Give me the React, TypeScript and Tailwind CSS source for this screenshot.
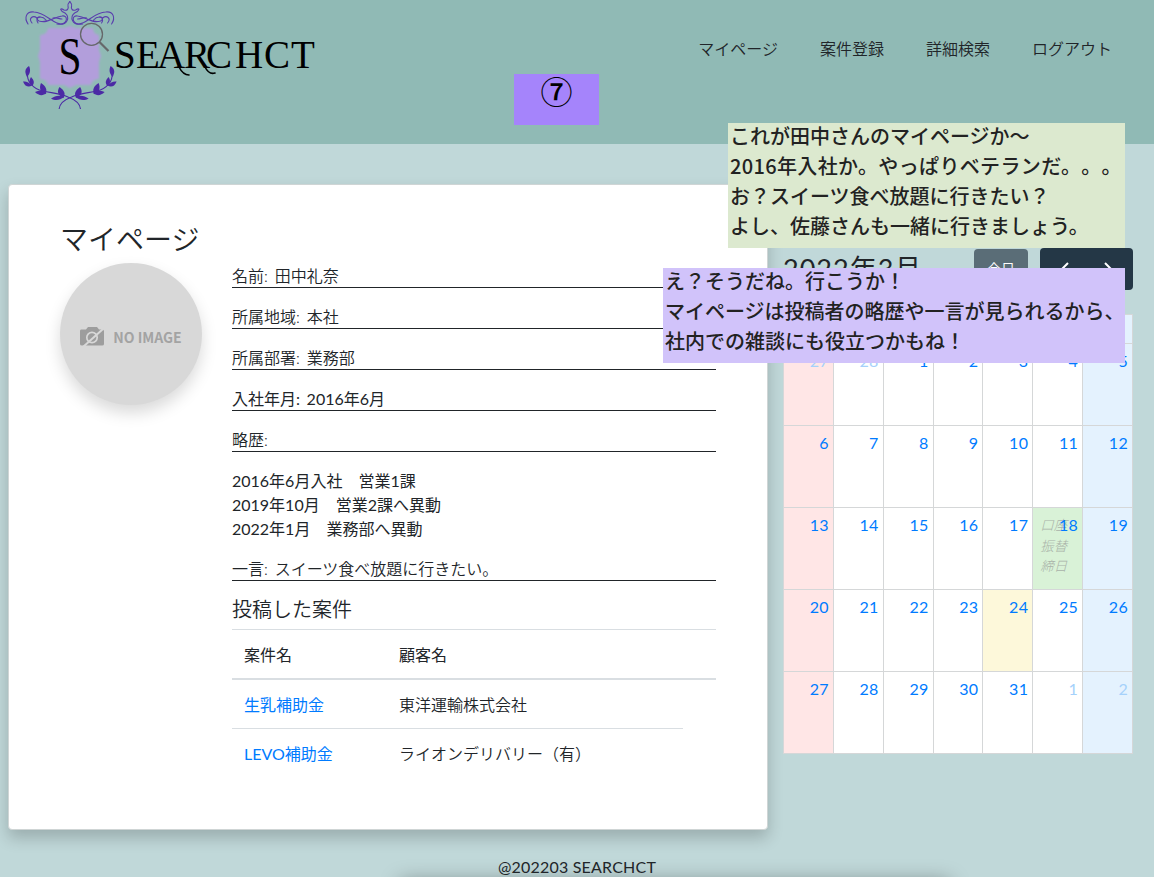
import React from "react";

const info = ["名前: 田中礼奈", "所属地域: 本社", "所属部署: 業務部", "入社年月: 2016年6月", "略歴:"];
const nav = ["マイページ", "案件登録", "詳細検索", "ログアウト"];
const weeks = [
  [27, 28, 1, 2, 3, 4, 5],
  [6, 7, 8, 9, 10, 11, 12],
  [13, 14, 15, 16, 17, 18, 19],
  [20, 21, 22, 23, 24, 25, 26],
  [27, 28, 29, 30, 31, 1, 2],
];
const weekdays = ["日", "月", "火", "水", "木", "金", "土"];

function Laurel() {
  return (
    <g>
      <path d="M27.500 72 C27 78 28 81 31 84 C34 88 38 90 43 91 C51 93 60 93 68 97 C76 100 80 104 80.500 109" fill="none" stroke="#4b2aa5" strokeWidth="1.1" />
      <g fill="#4b2aa5">
        <path d="M29 66 C24 69 25 73 27 77 C30 74 31 70 29 66Z" />
        <path d="M23 81.500 C25 87 29 87.500 32 85.500 C29 82 26 81 23 81.500Z" />
        <path d="M31 77 C34 80 35 83 32 86 C29 83 29 80 31 77Z" />
        <path d="M41 83 C46 86 47.500 90 45.500 94 C40 92 39 88 41 83Z" />
        <path d="M35 92 C39 96 43 96 46.500 93 C43 90 39 90.500 35 92Z" />
        <path d="M59.500 87 C65 91 65.500 94 63.500 98 C57 95 57 91 59.500 87Z" />
        <path d="M51 98.500 C55 101 60 100.500 64 97 C59 94.500 55 96 51 98.500Z" />
      </g>
    </g>
  );
}

function Scroll() {
  return (
    <g fill="none" stroke="#5a3fae" strokeWidth="1.1" strokeLinecap="round">
      <path d="M28 24 C24 18 26 11 34 12 C45 12 53 24 61 24 C68 23 68 15 62 16 C53 17 48 24 39 21 C33 17 42 15 46 20" />
      <path d="M32 23 C28 18 33 15 37 18 M38 23 C36 20 37 17 40 17 M53 18 C56 17 59 19 62 19" />
      <path d="M57 24 C68 26 70 17 65 13 C60 11 59 7 64 10 C67 11 69 9 68 6 C67 4 69 3 70 1.500" />
    </g>
  );
}

function Logo() {
  return (
    <svg width="320" height="116" viewBox="0 0 320 116" className="block">
      <defs>
        <filter id="soft" x="-10%" y="-10%" width="120%" height="120%">
          <feGaussianBlur stdDeviation="0.8" />
        </filter>
      </defs>
      <path
        filter="url(#soft)"
        d="M48 28 H64 L70 26 L76 28 H93 Q93 34 99 35 V50 L101 56 L99 62 V79 Q92 79 91 85 H76 L70 88 L64 85 H48 Q47 79 40 79 V62 L38 56 L40 50 V35 Q47 35 48 28Z"
        fill="#b29edb"
      />
      <Scroll />
      <g transform="translate(139.6 0) scale(-1 1)"><Scroll /></g>
      <Laurel />
      <g transform="translate(139.6 0) scale(-1 1)"><Laurel /></g>
      <text x="58.500" y="74" fontSize="52" textLength="23" lengthAdjust="spacingAndGlyphs" fontFamily="Liberation Serif, serif">S</text>
      <circle cx="91.500" cy="34.300" r="11" fill="none" stroke="#66686a" strokeWidth="1.3" />
      <path d="M99.500 42 L108.500 51" stroke="#66686a" strokeWidth="2.2" />
      <text x="114 136 157 184 206 235 264 291" y="68" fontSize="39" fontFamily="Liberation Serif, serif">SEARCHCT</text>
      <g fill="none" stroke="#000" strokeLinecap="round">
        <path d="M179 67 C182 73 185 75 189 75" strokeWidth="1.6" />
        <path d="M205 67 C208 73 212 74 215 73" strokeWidth="1.6" />
      </g>
    </svg>
  );
}

function NoImage() {
  return (
    <div className="flex h-[142px] w-[142px] items-center justify-center gap-[9px] rounded-full bg-[#d8d8d8] pt-1.5 shadow-[0_8px_16px_rgba(0,0,0,0.15)]">
      <svg width="24" height="22" viewBox="0 0 24 22">
        <path d="M1 3.500 H6 L8 1 H17 L19 3.500 H22 Q24 3.500 24 5 V18 Q24 19.500 22 19.500 H2 Q0 19.500 0 18 V5 Q0 3.500 1 3.500Z" fill="#9d9d9d" />
        <circle cx="12" cy="11.500" r="5.200" fill="none" stroke="#d8d8d8" strokeWidth="1.700" />
        <path d="M3 21 L23 3" stroke="#d8d8d8" strokeWidth="2" />
      </svg>
      <span className="font-['Noto_Sans_CJK_JP',sans-serif] text-[14px] font-bold leading-none text-[#a3a3a3]">NO IMAGE</span>
    </div>
  );
}

function dayColor(w: number, d: number, date: number) {
  if (d === 0) return "bg-[#ffe6e6]";
  if (d === 6) return "bg-[#e4f2fe]";
  if (w === 2 && date === 18) return "bg-[#d9f2d7]";
  if (w === 3 && date === 24) return "bg-[#fdf8da]";
  return "bg-white";
}

function Calendar() {
  return (
    <section className="w-[350px] pt-[63px]">
      <div className="flex h-[43px] items-center justify-between">
        <h2 className="text-[27px] font-normal leading-[34px] tracking-[1px]">2022年3月</h2>
        <div className="flex items-center gap-3">
          <button className="h-[39px] w-[54px] rounded bg-[#5a6d77] text-sm text-white">今日</button>
          <div className="flex h-[42px] w-[93px] items-center justify-around rounded bg-[#243746] px-1">
            <svg width="10" height="16" viewBox="0 0 10 16" fill="none" stroke="white" strokeWidth="2"><path d="M8 2 L2 8 L8 14" /></svg>
            <svg width="10" height="16" viewBox="0 0 10 16" fill="none" stroke="white" strokeWidth="2"><path d="M2 2 L8 8 L2 14" /></svg>
          </div>
        </div>
      </div>
      <div className="mt-6 border-l border-t border-[#d5d7d8]">
        <div className="grid h-[29px] grid-cols-7">
          {weekdays.map((d, i) => (
            <div key={d} className={`border-b border-r border-[#d5d7d8] text-center ${i === 0 ? "bg-[#ffe6e6]" : i === 6 ? "bg-[#e4f2fe]" : "bg-white"}`}>{d}</div>
          ))}
        </div>
        {weeks.map((days, w) => (
          <div key={w} className="grid h-[82px] grid-cols-7">
            {days.map((date, d) => {
              const other = (w === 0 && date > 20) || (w === 4 && date < 10);
              return (
                <div key={d} className={`relative border-b border-r border-[#d5d7d8] pr-1 pt-[5px] text-right font-normal leading-6 tracking-[0.3px] ${dayColor(w, d, date)}`}>
                  {w === 2 && date === 18 && (
                    <span className="absolute left-[7px] top-[7px] w-8 text-left text-[13.5px] font-light italic leading-[20.5px] tracking-normal text-[#a9b3a9]">口座振替締日</span>
                  )}
                  <span className={`relative ${other ? "text-[#a5d1fb]" : "text-[#007bff]"}`}>{date}</span>
                </div>
              );
            })}
          </div>
        ))}
      </div>
    </section>
  );
}

export default function App() {
  return (
    <div className="relative h-[877px] w-[1154px] overflow-hidden bg-[#c0d8d9] font-['Lato','Noto_Sans_CJK_JP',sans-serif] text-base font-[350] text-[#212529] [text-spacing-trim:space-all]">
      <header className="flex h-36 justify-between bg-[#90bab5]">
        <Logo />
        <nav className="flex gap-[42px] pr-[42px] pt-[37px] leading-6">
          {nav.map((n) => <a key={n}>{n}</a>)}
        </nav>
      </header>

      <main className="flex items-start gap-[15px] pl-2 pt-10">
        <section className="h-[646px] w-[760px] rounded border border-[#cfd5d5] bg-white pl-[51px] pt-[37px] shadow-[0_8px_16px_rgba(0,0,0,0.2)]">
          <h1 className="h-[41px] text-[28px] leading-[34px]">マイページ</h1>
          <div className="flex gap-[30px]">
            <NoImage />
            <div className="w-[484px] [word-spacing:2.5px]">
              {info.map((t) => <p key={t} className={`mb-4 h-[25px] border-b border-[#212529] leading-[26px] ${/\d/.test(t) ? "font-normal" : ""}`}>{t}</p>)}
              <p className="mb-[15px] whitespace-pre pt-px font-normal leading-6">{"2016年6月入社　営業1課\n2019年10月　営業2課へ異動\n2022年1月　業務部へ異動"}</p>
              <p className="mb-4 h-[25px] border-b border-[#212529] leading-[26px]">一言: スイーツ食べ放題に行きたい。</p>
              <h2 className="mb-2 h-6 text-xl leading-6">投稿した案件</h2>
              <div className="flex h-[51px] border-b-2 border-t border-[#d9dee2] pl-3 pt-[13px] font-normal leading-6">
                <span className="w-[155px]">案件名</span><span>顧客名</span>
              </div>
              <div className="flex h-[49px] w-[451px] border-b border-[#d9dee2] pl-3 pt-[13px] leading-6">
                <a className="w-[155px] font-normal text-[#007bff]">生乳補助金</a><span>東洋運輸株式会社</span>
              </div>
              <div className="flex h-12 w-[451px] pl-3 pt-[13px] leading-6">
                <a className="w-[155px] font-normal text-[#007bff]">LEVO補助金</a><span>ライオンデリバリー（有）</span>
              </div>
            </div>
          </div>
        </section>
        <Calendar />
      </main>

      <div className="absolute left-[400px] top-[881px] h-5 w-[550px] shadow-[0_0_20px_rgba(0,0,0,0.35)]" />
      <footer className="relative pt-[25px] text-center font-normal leading-6 tracking-[0.2px]">@202203 SEARCHCT</footer>

      <div className="absolute left-[514px] top-[74px] h-[51px] w-[85px] bg-[#a584fb] text-center font-['Noto_Sans_CJK_JP',sans-serif] text-[32px] font-medium leading-[32px] text-black">⑦</div>
      <div className="absolute left-[728px] top-[123px] h-[125px] w-[397px] whitespace-pre bg-[#dce9cf] pl-0.5 font-['Noto_Sans_CJK_JP',sans-serif] text-xl font-medium leading-[30px] text-[#222]">
        <p className="-mt-0.5">これが田中さんのマイページか〜</p>
        <p className="tracking-[0.35px]">2016年入社か。やっぱりベテランだ。。。</p>
        <p>{"お？スイーツ食べ放題に行きたい？\nよし、佐藤さんも一緒に行きましょう。"}</p>
      </div>
      <div className="absolute left-[663px] top-[268px] h-[95px] w-[462px] whitespace-pre bg-[#d1c3fa] pl-0.5 font-['Noto_Sans_CJK_JP',sans-serif] text-xl font-medium leading-[30px] text-[#222]">
        <p className="-mt-0.5">{"え？そうだね。行こうか！\nマイページは投稿者の略歴や一言が見られるから、\n社内での雑談にも役立つかもね！"}</p>
      </div>
    </div>
  );
}
